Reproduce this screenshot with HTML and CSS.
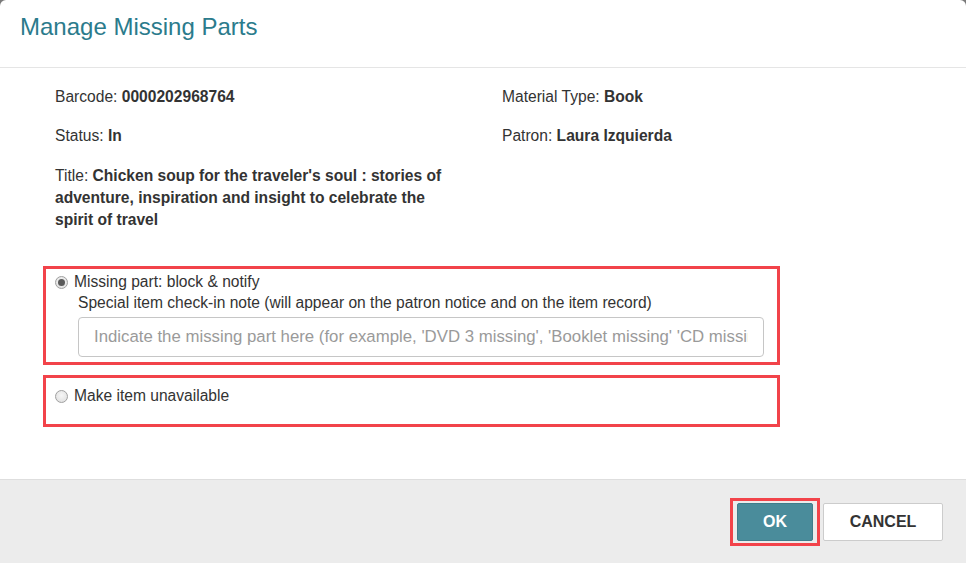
FILE: index.html
```html
<!DOCTYPE html>
<html lang="en">
<head>
<meta charset="utf-8">
<title>Manage Missing Parts</title>
<link rel="stylesheet" href="styles.css">
</head>
<body>
<div class="modal">
  <div class="modal-header">
    <h1 class="modal-title">Manage Missing Parts</h1>
  </div>
  <div class="modal-body">
    <div class="details">
      <p class="field">Barcode: <b>0000202968764</b></p>
      <p class="field">Material Type: <b>Book</b></p>
      <p class="field">Status: <b>In</b></p>
      <p class="field">Patron: <b>Laura Izquierda</b></p>
      <p class="field field-title">Title: <b>Chicken soup for the traveler's soul : stories of adventure, inspiration and insight to celebrate the spirit of travel</b></p>
    </div>
    <div class="option option-first">
      <label class="radio-label"><input type="radio" name="action" class="radio" checked> Missing part: block &amp; notify</label>
      <div class="option-sub">
        <div class="note-label">Special item check-in note (will appear on the patron notice and on the item record)</div>
        <input type="text" class="note-input" placeholder="Indicate the missing part here (for example, 'DVD 3 missing', 'Booklet missing' 'CD missing')">
      </div>
    </div>
    <div class="option option-second">
      <label class="radio-label"><input type="radio" name="action" class="radio"> Make item unavailable</label>
    </div>
  </div>
  <div class="modal-footer">
    <div class="highlight-btn"><button class="btn btn-primary">OK</button></div>
    <button class="btn btn-default">CANCEL</button>
  </div>
</div>
</body>
</html>
```

FILE: styles.css
```css
html, body {
  margin: 0;
  padding: 0;
  height: 100%;
}
body {
  background: #7a7a7a;
  font-family: "Liberation Sans", Arial, sans-serif;
  color: #333;
  font-size: 15.6px;
}
.modal {
  width: 966px;
  height: 563px;
  background: #fff;
  border-radius: 6px 6px 0 0;
  display: flex;
  flex-direction: column;
  overflow: hidden;
}
.modal-header {
  border-bottom: 1px solid #e5e5e5;
  box-sizing: border-box;
  height: 68px;
  padding: 13px 20px 0;
}
.modal-title {
  margin: 0;
  font-size: 24px;
  font-weight: normal;
  line-height: 28px;
  color: #2b7b8c;
}
.modal-body {
  flex: 1;
  padding: 18px 0 0 43px;
}
.details {
  display: grid;
  grid-template-columns: 447px 400px;
  padding-left: 12px;
}
.field {
  margin: 0 0 17px;
  line-height: 22px;
}
.field-title {
  margin-top: 1px;
  width: 405px;
}
.field b {
  font-weight: bold;
}
.option {
  width: 737px;
  box-sizing: border-box;
  border: 3px solid #f2434a;
}
.option-first {
  margin-top: 18px;
  height: 99px;
  padding: 3px 13px 0 9px;
}
.option-second {
  margin-top: 10px;
  height: 52px;
  padding: 8px 13px 0 9px;
}
.radio-label {
  display: flex;
  align-items: center;
  line-height: 20px;
  gap: 6px;
}
.radio {
  appearance: none;
  -webkit-appearance: none;
  margin: 0;
  width: 13px;
  height: 13px;
  border-radius: 50%;
  border: 1px solid #a0a0a0;
  background: radial-gradient(circle at 50% 40%, #f6f6f6 0%, #dcdcdc 100%);
  box-sizing: border-box;
  position: relative;
  flex: none;
}
.radio:checked::after {
  content: "";
  position: absolute;
  left: 2px;
  top: 2px;
  width: 7px;
  height: 7px;
  border-radius: 50%;
  background: #5a5a5a;
}
.option-sub {
  padding-left: 23px;
}
.note-label {
  line-height: 20px;
  margin-top: 1px;
}
.note-input {
  display: block;
  width: 686px;
  height: 40px;
  box-sizing: border-box;
  margin-top: 4px;
  border: 1px solid #c6c6c6;
  border-radius: 4px;
  padding: 0 15px;
  font-family: "Liberation Sans", Arial, sans-serif;
  font-size: 16.8px;
  color: #333;
  outline: none;
}
.note-input::placeholder {
  color: #9a9a9a;
}
.modal-footer {
  height: 84px;
  box-sizing: border-box;
  background: #ececec;
  border-top: 1px solid #dedede;
  display: flex;
  justify-content: flex-end;
  align-items: flex-start;
  padding: 18px 23px 0 0;
  gap: 3px;
}
.highlight-btn {
  border: 3px solid #f2434a;
  padding: 2px 4px;
  display: flex;
}
.btn {
  height: 38px;
  box-sizing: border-box;
  font-family: "Liberation Sans", Arial, sans-serif;
  font-size: 16px;
  font-weight: bold;
  border-radius: 2px;
  cursor: pointer;
}
.btn-primary {
  width: 76px;
  background: #4a8c9b;
  border: 1px solid #3f7d8b;
  color: #fff;
}
.btn-default {
  margin-top: 5px;
  width: 120px;
  background: #fff;
  border: 1px solid #cccccc;
  color: #333;
}
```
